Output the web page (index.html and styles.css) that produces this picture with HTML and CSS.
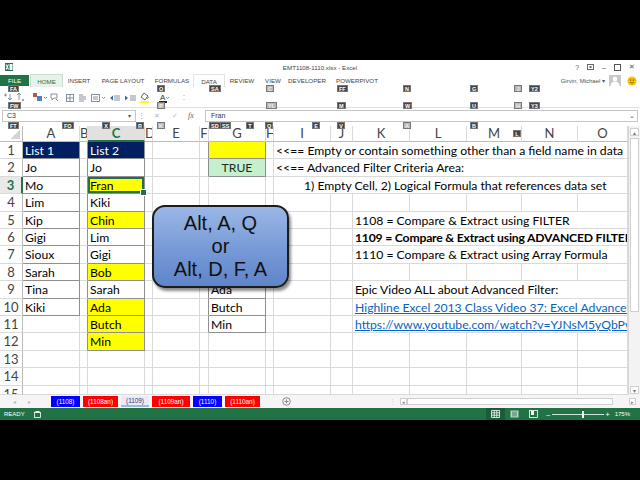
FILE: index.html
```html
<!DOCTYPE html>
<html>
<head>
<meta charset="utf-8">
<link rel="stylesheet" href="styles.css">
</head>
<body>
<div class="blk"></div>
<div class="excel">
  <div class="titlebar">
    <div class="tb-left">
      <svg width="8" height="8" viewBox="0 0 8 8"><rect x="0" y="0" width="8" height="8" fill="#1e7145"/><rect x="4.5" y="1" width="3" height="6" fill="#fff"/><path d="M1 1.5l2.5 5M3.5 1.5l-2.5 5" stroke="#fff" stroke-width="1.1"/></svg>
    </div>
    <div class="tb-title">EMT1108-1110.xlsx - Excel</div>
    <div class="tb-right">
      <span>?</span>
      <svg width="7" height="6" viewBox="0 0 7 6"><rect x="0.5" y="0.5" width="6" height="5" fill="none" stroke="#666"/><path d="M2 3h3M3.5 2v2" stroke="#666"/></svg>
      <span>&#8211;</span>
      <svg width="7" height="7" viewBox="0 0 7 7"><rect x="0.5" y="0.5" width="6" height="6" fill="none" stroke="#555"/></svg>
      <span class="x">&#10005;</span>
    </div>
  </div>
  <div class="tabs">
    <div class="tab file">FILE</div>
    <div class="tab home">HOME</div>
    <div class="tab w32">INSERT</div>
    <div class="tab w56">PAGE LAYOUT</div>
    <div class="tab w42">FORMULAS</div>
    <div class="tab w32 data">DATA</div>
    <div class="tab w34">REVIEW</div>
    <div class="tab w28">VIEW</div>
    <div class="tab w40">DEVELOPER</div>
    <div class="tab w60">POWERPIVOT</div>
    <div class="tabs-right">
      <span class="user">Girvin, Michael &#9662;</span>
      <span class="avatar"><svg width="12" height="11" viewBox="0 0 12 11"><circle cx="6" cy="4" r="2.3" fill="#fff"/><path d="M1.5 11c0-3 2-4.5 4.5-4.5s4.5 1.5 4.5 4.5z" fill="#fff"/></svg></span>
      <svg class="smiley" width="10" height="10" viewBox="0 0 10 10"><circle cx="5" cy="5" r="4.6" fill="#f5c400"/><circle cx="3.5" cy="4" r=".7" fill="#6b4a00"/><circle cx="6.5" cy="4" r=".7" fill="#6b4a00"/><path d="M3 6.2q2 1.8 4 0" fill="none" stroke="#6b4a00" stroke-width=".7"/></svg>
    </div>
  </div>
  <div class="ribbon">
    <svg width="200" height="21" viewBox="0 0 200 21">
      <g fill="none" stroke="#7a8796" stroke-width="0.9">
        <path d="M4 8h3M5.5 6.5v3M8 11l2 2 2-2M10 7v6"/>
        <path d="M17 8l2-2 2 2M19 6v7M22 13h2M23 12v2"/>
        <path d="M51 7h6v4h-3l-2 2v-2h-1z"/>
        <path d="M56 12l2 2"/>
        <rect x="66.5" y="7.5" width="7" height="7"/>
        <path d="M70 7.5v7M66.5 11h7"/>
        <path d="M79 8h4M79 10h7M79 12h7M79 14h5"/>
        <rect x="91.5" y="7.5" width="8" height="7"/>
        <path d="M93 10h5M93 12h5M102 10l1.5 1.5 1.5-1.5"/>
        <path d="M114 9h6M114 11h6M114 13h6"/>
        <path d="M130 9h6M130 11h6M130 13h6"/>
        <path d="M146 10l1.5 1.5 1.5-1.5M166 10l1.5 1.5 1.5-1.5"/>
      </g>
      <path d="M33 6h4v4h-4z" fill="#c0504d"/><path d="M37 9h5v5h-5z" fill="#4f81bd"/>
      <path d="M44 10l1.5 1.5 1.5-1.5" fill="none" stroke="#7a8796" stroke-width=".9"/>
      <path d="M110 11l3-2.5v5z" fill="#2e6fb5"/>
      <path d="M128 11l-3-2.5v5z" fill="#2e6fb5"/>
      <path d="M141 10l3-4 4 3-3 4z" fill="none" stroke="#555" stroke-width=".9"/>
      <rect x="140" y="14" width="9" height="2" fill="#ffff00"/>
      <text x="160" y="13" font-family="Liberation Sans, sans-serif" font-size="8" fill="#333">A</text>
      <rect x="159" y="14" width="8" height="2" fill="#222"/>
      <path d="M184 8.5v.5M184 12v.5" stroke="#777" stroke-width="1.2"/>
    </svg>
  </div>
  <div class="fbar">
    <div class="namebox"><span>C3</span><span class="caret">&#9662;</span></div>
    <div class="fdots">&#8942;</div>
    <div class="ficons"><span class="fx1">&#10005;</span><span class="fx2">&#10003;</span><span class="fx3">fx</span></div>
    <div class="finput"><span>Fran</span><span class="caret2">&#8964;</span></div>
  </div>
  <div class="gap"></div>
  <div class="sheet">
    <div class="grid">
      <span class="corner"></span><span class="ch">A</span><span class="ch">B</span><span class="ch selc">C</span><span class="ch">D</span><span class="ch">E</span><span class="ch">F</span><span class="ch">G</span><span class="ch">H</span><span class="ch">I</span><span class="ch">J</span><span class="ch">K</span><span class="ch">L</span><span class="ch">M</span><span class="ch">N</span><span class="ch">O</span>

      <span class="rh">1</span><span class="nv bA">List 1</span><span class="bR"></span><span class="nv bA">List 2</span><span></span><span></span><span class="bR"></span><span class="yl bA"></span><span></span><span class="s7">&lt;&lt;== Empty or contain something other than a field name in data</span>

      <span class="rh">2</span><span class="bA">Jo</span><span class="bR"></span><span class="bA">Jo</span><span></span><span></span><span class="bR"></span><span class="gr bA">TRUE</span><span></span><span class="s7">&lt;&lt;== Advanced Filter Criteria Area:</span>

      <span class="rh selr">3</span><span class="bA">Mo</span><span class="bR"></span><span class="yl bA sel">Fran</span><span></span><span></span><span></span><span></span><span></span><span class="s7 ind">1) Empty Cell, 2) Logical Formula that references data set</span>

      <span class="rh">4</span><span class="bA">Lim</span><span class="bR"></span><span class="bA">Kiki</span><span></span><span></span><span></span><span></span><span></span><span></span><span></span><span></span><span></span><span></span><span></span><span></span>

      <span class="rh">5</span><span class="bA">Kip</span><span class="bR"></span><span class="yl bA">Chin</span><span></span><span></span><span></span><span></span><span></span><span></span><span></span><span class="s5">1108 = Compare &amp; Extract using FILTER</span>

      <span class="rh">6</span><span class="bA">Gigi</span><span class="bR"></span><span class="bA">Lim</span><span></span><span></span><span></span><span></span><span></span><span></span><span></span><span class="s5 bold">1109 = Compare &amp; Extract using ADVANCED FILTER</span>

      <span class="rh">7</span><span class="bA">Sioux</span><span class="bR"></span><span class="bA">Gigi</span><span></span><span></span><span></span><span></span><span></span><span></span><span></span><span class="s5">1110 = Compare &amp; Extract using Array Formula</span>

      <span class="rh">8</span><span class="bA">Sarah</span><span class="bR"></span><span class="yl bA">Bob</span><span></span><span></span><span></span><span class="bB"></span><span></span><span></span><span></span><span></span><span></span><span></span><span></span><span></span>

      <span class="rh">9</span><span class="bA">Tina</span><span class="bR"></span><span class="bA">Sarah</span><span></span><span></span><span class="bR"></span><span class="bA">Ada</span><span></span><span></span><span></span><span class="s5">Epic Video ALL about Advanced Filter:</span>

      <span class="rh">10</span><span class="bA">Kiki</span><span class="bR"></span><span class="yl bA">Ada</span><span></span><span></span><span class="bR"></span><span class="bA">Butch</span><span></span><span></span><span></span><span class="s5 link">Highline Excel 2013 Class Video 37: Excel Advanced Filter</span>

      <span class="rh">11</span><span></span><span class="bR"></span><span class="yl bA">Butch</span><span></span><span></span><span class="bR"></span><span class="bA">Min</span><span></span><span></span><span></span><span class="s5 link">https://www.youtube.com/watch?v=YJNsM5yQbPw</span>

      <span class="rh">12</span><span></span><span class="bR"></span><span class="yl bA">Min</span><span></span><span></span><span></span><span></span><span></span><span></span><span></span><span></span><span></span><span></span><span></span><span></span>

      <span class="rh">13</span><span></span><span></span><span></span><span></span><span></span><span></span><span></span><span></span><span></span><span></span><span></span><span></span><span></span><span></span><span></span>

      <span class="rh">14</span><span></span><span></span><span></span><span></span><span></span><span></span><span></span><span></span><span></span><span></span><span></span><span></span><span></span><span></span><span></span>

      <span class="rh">15</span><span></span><span></span><span></span><span></span><span></span><span></span><span></span><span></span><span></span><span></span><span></span><span></span><span></span><span></span><span></span>
    </div>
    <div class="vscroll">
      <div class="vup">&#9652;</div>
      <div class="vthumb"></div>
      <div class="vdown">&#9662;</div>
    </div>
    <div class="callout">
      <div>Alt, A, Q</div>
      <div>or</div>
      <div>Alt, D, F, A</div>
    </div>
  </div>
  <div class="sheettabs">
    <span class="nav">&#9666;</span><span class="nav">&#9656;</span>
    <span class="st blue">(1108)</span>
    <span class="st red">(1108an)</span>
    <span class="st active">(1109)</span>
    <span class="st red">(1109an)</span>
    <span class="st blue">(1110)</span>
    <span class="st red">(1110an)</span>
    <span class="plus"><svg width="9" height="9" viewBox="0 0 9 9"><circle cx="4.5" cy="4.5" r="3.8" fill="none" stroke="#8a8a8a"/><path d="M2.5 4.5h4M4.5 2.5v4" stroke="#8a8a8a"/></svg></span>
    <span class="hdots">&#8942;</span>
    <div class="hscroll"><span class="hl">&#9666;</span><span class="hthumb"></span><span class="hr">&#9656;</span></div>
  </div>
  <div class="status">
    <span class="ready">READY</span>
    <svg class="macro" width="7" height="7" viewBox="0 0 7 7"><rect x="0.5" y="1.5" width="6" height="5" fill="none" stroke="#fff" stroke-width=".8"/><rect x="1.5" y="0" width="4" height="2" fill="#fff"/></svg>
    <div class="views">
      <span class="v vsel"><svg width="9" height="8" viewBox="0 0 9 8"><path d="M0.5 0.5h8v7h-8zM0.5 2.8h8M0.5 5.2h8M3.2 0.5v7M5.8 0.5v7" fill="none" stroke="#fff" stroke-width=".8"/></svg></span>
      <span class="v"><svg width="9" height="8" viewBox="0 0 9 8"><rect x="0.5" y="0.5" width="8" height="7" fill="#b9d3c4"/><rect x="2" y="1.5" width="5" height="5" fill="#7fa58f"/></svg></span>
      <span class="v"><svg width="9" height="8" viewBox="0 0 9 8"><rect x="0.5" y="0.5" width="8" height="7" fill="none" stroke="#fff" stroke-width=".8"/><rect x="2" y="1" width="3" height="4" fill="#fff"/></svg></span>
    </div>
    <div class="zoom"><span class="zm">&#8211;</span><span class="zline"><i class="zthumb"></i></span><span class="zp">+</span><span class="zpct">175%</span></div>
  </div>

  <span class="kt" style="left:8px;top:25px">FA</span>
  <span class="kt" style="left:157px;top:25px">O</span>
  <span class="kt" style="left:209px;top:25px">SA</span>
  <span class="kt lt" style="left:266px;top:25px">C</span>
  <span class="kt" style="left:337px;top:25px">FF</span>
  <span class="kt" style="left:403px;top:25px">N</span>
  <span class="kt" style="left:470px;top:25px">G</span>
  <span class="kt lt" style="left:514px;top:25px">J</span>
  <span class="kt" style="left:529px;top:25px">Y2</span>

  <span class="kt" style="left:8px;top:42px">FW</span>
  <span class="kt lt" style="left:157px;top:42px">P</span>
  <span class="kt lt" style="left:266px;top:42px">YL</span>
  <span class="kt" style="left:337px;top:42px">M</span>
  <span class="kt" style="left:403px;top:42px">W</span>
  <span class="kt" style="left:470px;top:42px">U</span>
  <span class="kt lt" style="left:514px;top:42px">H</span>
  <span class="kt" style="left:529px;top:42px">Y3</span>

  <span class="kt" style="left:8px;top:62px">FT</span>
  <span class="kt" style="left:62px;top:62px">FO</span>
  <span class="kt" style="left:102px;top:62px">X</span>
  <span class="kt" style="left:136px;top:62px">R</span>
  <span class="kt lt" style="left:157px;top:62px">K</span>
  <span class="kt" style="left:209px;top:62px">SD</span>
  <span class="kt" style="left:220px;top:62px">SS</span>
  <span class="kt" style="left:246px;top:62px">T</span>
  <span class="kt" style="left:265px;top:62px">Q</span>
  <span class="kt" style="left:312px;top:62px">E</span>
  <span class="kt" style="left:337px;top:62px">V</span>
  <span class="kt lt" style="left:403px;top:62px">A</span>
  <span class="kt" style="left:470px;top:62px">B</span>
  <span class="kt" style="left:513px;top:70px">L</span>
</div>
<div class="blk"></div>
</body>
</html>
```

FILE: styles.css
```css
* { box-sizing: border-box; margin: 0; padding: 0; }
html, body { background: #000; }
body { width: 640px; height: 480px; overflow: hidden; font-family: "Liberation Sans", Arial, sans-serif; }
.blk { height: 60px; background: #000; }
.excel { position: relative; height: 360px; background: #fff; display: flex; flex-direction: column; overflow: hidden; }

/* title bar */
.titlebar { height: 14px; display: grid; grid-template-columns: 1fr auto 1fr; align-items: center; color: #444; font-size: 6px; }
.tb-left { padding-left: 5px; display: flex; align-items: center; }
.tb-title { font-size: 6.2px; color: #444; }
.tb-right { justify-self: end; display: flex; align-items: center; gap: 8px; padding-right: 5px; font-size: 7px; color: #555; }
.tb-right .x { font-size: 7px; }

/* tabs */
.tabs { height: 13px; display: flex; align-items: stretch; font-size: 6.2px; color: #444; }
.tab { display: flex; align-items: center; justify-content: center; }
.tab.file { width: 29px; background: #217346; color: #fff; margin-top: 1px; margin-bottom: 1px; }
.tab.home { width: 33px; margin-left: 1px; background: #e8f2ec; border: 1px solid #c9ddd1; border-bottom: none; color: #217346; }
.w32 { width: 32px; } .w56 { width: 56px; } .w42 { width: 42px; } .w34 { width: 34px; }
.w28 { width: 28px; } .w40 { width: 40px; } .w60 { width: 60px; }
.tab.data { border: 1px solid #e3e3e3; border-bottom: none; }
.tabs-right { margin-left: auto; display: flex; align-items: center; padding-right: 3px; }
.user { font-size: 6px; color: #555; margin-right: 4px; }
.avatar { width: 12px; height: 11px; background: #c8c8c8; display: flex; margin-right: 6px; }
.smiley { display: block; }

/* ribbon */
.ribbon { height: 21px; border-bottom: 1px solid #e1e1e1; }
.ribbon svg { display: block; }

/* formula bar */
.fbar { height: 15px; display: flex; align-items: center; padding: 0 2px; font-size: 7px; color: #333; }
.namebox { width: 134px; height: 12px; border: 1px solid #c6c6c6; display: flex; align-items: center; justify-content: space-between; padding: 0 4px 0 4px; }
.caret { font-size: 6px; color: #555; }
.fdots { width: 10px; text-align: center; color: #999; font-size: 7px; }
.ficons { width: 59px; display: flex; align-items: center; padding-left: 8px; gap: 0; }
.fx1 { color: #bbb; width: 18px; }
.fx2 { color: #bbb; width: 16px; }
.fx3 { color: #666; font-style: italic; font-family: "Liberation Serif", serif; font-size: 8px; }
.finput { flex: 1; height: 12px; border: 1px solid #c6c6c6; display: flex; align-items: center; justify-content: space-between; padding: 0 2px 0 5px; }
.caret2 { font-size: 7px; color: #555; line-height: 4px; }
.gap { height: 3px; }

/* sheet */
.sheet { position: relative; height: 269px; display: flex; }
.grid { width: 628px; height: 269px; overflow: hidden; display: grid;
  grid-template-columns: 23px 57px 8px 57px 8px 47px 9px 57px 8px 57px 22px 57px 57px 55px 56px 50px;
  grid-template-rows: 16px 17px 18px 17px 18px 17px 17px 18px 17px 18px 17px 17px 18px 17px 18px 9px;
  font-family: Lato, "Liberation Sans", sans-serif; font-size: 12.2px; color: #000; }
.grid > span { border-right: 1px solid #dadada; border-bottom: 1px solid #dadada; white-space: nowrap; overflow: hidden; padding-left: 2px; line-height: 17px; }
.grid > span.corner { background: linear-gradient(to bottom right, transparent 50%, #d4d4d4 50%) no-repeat right 2px bottom 2px / 10px 10px; border-right-color: #bcbcbc; border-bottom-color: #bcbcbc; }
.grid > span.ch { text-align: center; padding: 0; font-size: 13px; color: #444; line-height: 15px; border-bottom-color: #bcbcbc; }
.grid > span.ch.selc { background: #e1e1e1; color: #217346; font-weight: bold; border-bottom: 2px solid #217346; }
.grid > span.rh { text-align: center; padding: 0; font-size: 13px; color: #444; line-height: 16px; border-right-color: #bcbcbc; }
.grid > span.rh.selr { color: #217346; font-weight: bold; background: #e9e9e9; border-right: 2px solid #217346; }
.grid > span.bA { border-right-color: #8f8f8f; border-bottom-color: #8f8f8f; }
.grid > span.bR { border-right-color: #8f8f8f; }
.grid > span.bB { border-bottom-color: #8f8f8f; }
.grid > span.nv { background: #002060; color: #fff; }
.grid > span.yl { background: #ffff00; }
.grid > span.gr { background: #c6efce; text-align: center; padding: 0; color: #1b2e1b; }
.grid > span.s7 { grid-column: span 7; }
.grid > span.s5 { grid-column: span 5; }
.grid > span.ind { padding-left: 30px; }
.grid > span.bold { font-weight: bold; letter-spacing: -0.2px; }
.grid > span.link { color: #0563c1; text-decoration: underline; }
.grid > span.sel { position: relative; overflow: visible; box-shadow: inset 0 0 0 2px #217346; }
.grid > span.sel::after { content: ""; position: absolute; right: -3px; bottom: -3px; width: 5px; height: 5px; background: #217346; border: 1px solid #fff; }

.vscroll { width: 12px; height: 269px; background: #f3f3f3; border-left: 1px solid #d6d6d6; position: relative; display: flex; flex-direction: column; align-items: center; }
.vup, .vdown { width: 9px; height: 8px; font-size: 6px; color: #777; text-align: center; line-height: 8px; background: #fff; border: 1px solid #d0d0d0; }
.vup { margin-top: 2px; }
.vthumb { width: 9px; height: 174px; margin-top: 2px; background: #fff; border: 1px solid #cfcfcf; }
.vdown { margin-top: auto; margin-bottom: 1px; }

.callout { position: absolute; left: 152px; top: 79px; width: 137px; height: 83px; border: 2px solid #1c1c1c; border-radius: 13px;
  background: linear-gradient(#9ab7e6, #7699d6 55%, #5f84c8); box-shadow: 2px 3px 3px rgba(0,0,0,.45);
  display: flex; flex-direction: column; justify-content: center; align-items: center;
  font-family: "Liberation Sans", Arial, sans-serif; font-size: 20px; line-height: 23px; color: #111; }

/* sheet tabs */
.sheettabs { height: 13px; background: #f7f4f7; display: flex; align-items: center; font-size: 6px; }
.nav { color: #bbb; width: 15px; text-align: center; }
.nav:first-child { margin-left: 7px; }
.st { height: 11px; display: flex; align-items: center; justify-content: center; color: #fff; font-size: 6.4px; margin-right: 3px; }
.st.blue { background: #0000ff; width: 29px; }
.st.red { background: #ff0000; width: 35px; }
.st.red:nth-of-type(6) { width: 38px; }
.st.active { background: #eeeaf5; color: #223a7a; width: 28px; border-bottom: 2px solid #9db7d6; }
.sheettabs .st.blue:nth-of-type(3) { margin-left: 14px; }
.plus { margin-left: 19px; display: flex; }
.hdots { margin-left: 98px; color: #ccc; font-size: 7px; }
.hscroll { margin-left: 4px; width: 236px; height: 9px; display: flex; align-items: center; }
.hl, .hr { width: 7px; height: 7px; border: 1px solid #cfcfcf; background: #fff; font-size: 5px; color: #777; display: flex; align-items: center; justify-content: center; }
.hthumb { width: 206px; height: 7px; background: #fff; border: 1px solid #cfcfcf; }
.hr { margin-left: auto; }

/* status bar */
.status { height: 12px; background: #217346; display: flex; align-items: center; color: #fff; font-size: 6px; }
.ready { margin-left: 4px; }
.macro { margin-left: 9px; }
.views { margin-left: auto; display: flex; height: 12px; }
.v { width: 19px; display: flex; align-items: center; justify-content: center; }
.v.vsel { background: #1a5c38; }
.zoom { display: flex; align-items: center; margin-left: 2px; padding-right: 10px; }
.zm { width: 7px; text-align: center; font-size: 7px; }
.zline { position: relative; width: 52px; height: 1px; background: #cfe3d7; }
.zthumb { position: absolute; left: 30px; top: -3px; width: 2px; height: 7px; background: #fff; }
.zp { width: 8px; text-align: center; font-size: 8px; }
.zpct { margin-left: 3px; font-size: 6px; }

/* keytips */
.kt { position: absolute; height: 7px; min-width: 8px; padding: 0 1px; background: #444; color: #fff; font-size: 5.5px; font-weight: bold; line-height: 7px; text-align: center; border: 0.5px solid #777; }
.kt.lt { background: #b8b8b8; color: #eee; }
```
